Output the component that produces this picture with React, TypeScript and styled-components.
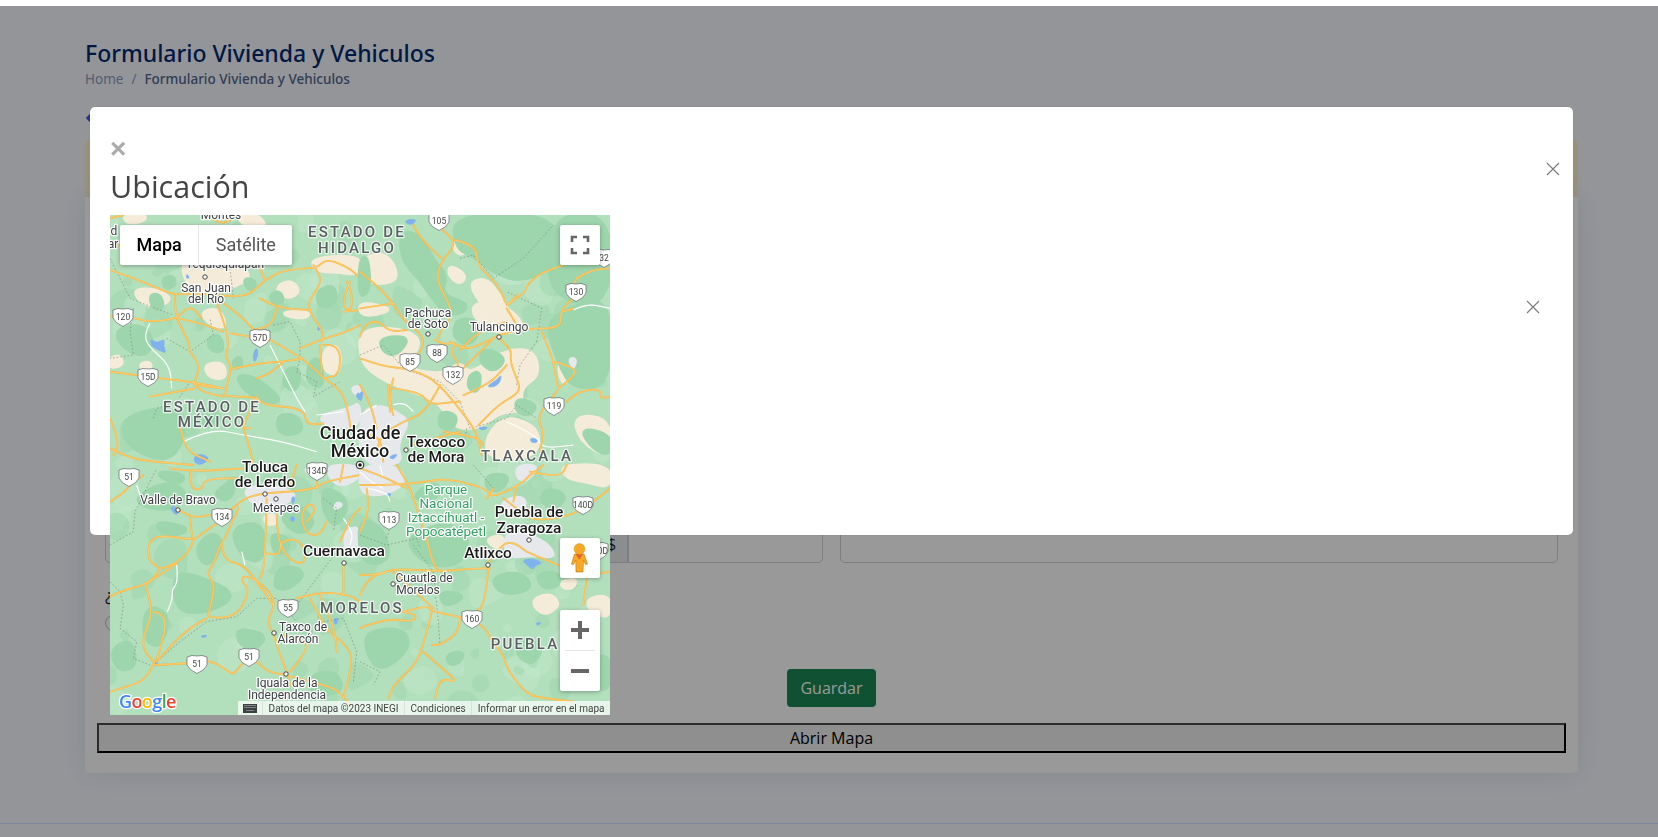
import styled, { createGlobalStyle } from "styled-components"
import { FaArrowLeft } from "react-icons/fa"

// every tile is 250x250 on the map, its paths are in a 750x750 grid
interface ITile {
    x: number
    y: number
    beige: string[]
    dark: string[]
    urban: string[]
    water: string[]
    white: string[]
    borders: string[]
    roads: string[]
}

const tiles: ITile[] = [
    {
        x: 0,
        y: 0,
        beige: [
            "M220 130 L300 160 L340 170 L400 150 L420 190 L380 210 L330 230 L260 230 L220 190Z",
            "M500 215 L540 195 L570 225 L545 250 L510 240Z",
            "M270 290 L330 280 L350 340 L300 330Z",
            "M70 225 L130 220 L190 250 L140 280 L90 260Z",
            "M280 450 L340 440 L350 490 L300 490Z",
            "M0 430 L30 420 L40 450 L0 460Z",
            "M90 445 L120 440 L125 460 L95 465Z",
            "M600 130 L750 120 L750 180 L680 170 L620 170Z",
            "M520 290 L600 290 L590 310 L530 305Z",
            "M640 400 L690 390 L690 480 L640 470Z",
            "M40 0 L110 0 L100 20 L50 25Z",
            "M380 0 L450 0 L470 40 L400 30Z"
        ],
        dark: [
            "M30 340 L90 330 L130 370 L110 420 L60 410 L20 370Z",
            "M30 620 L130 580 L220 590 L220 680 L170 740 L60 700Z",
            "M160 190 L190 185 L195 210 L165 220Z",
            "M295 370 L330 360 L340 410 L300 405Z",
            "M370 440 L390 425 L395 450 L375 460Z",
            "M380 480 L440 490 L520 560 L460 560 L400 520Z",
            "M500 600 L560 600 L580 650 L510 660Z",
            "M480 240 L510 230 L520 260 L490 265Z",
            "M120 240 L150 240 L160 280 L130 280Z",
            "M620 230 L670 210 L680 260 L630 280Z",
            "M600 440 L630 430 L640 520 L590 500Z",
            "M530 460 L570 460 L560 530 L520 510Z",
            "M270 580 L340 600 L300 640 L260 620Z",
            "M400 190 L440 200 L420 230Z"
        ],
        urban: ["M630 600 L720 580 L750 560 L750 640 L640 630Z", "M720 520 L750 510 L750 550Z"],
        water: [
            "M120 370 L140 385 L165 370 L160 395 L170 415 L145 405 L125 395Z",
            "M440 395 L445 420 L432 445 L428 420Z",
            "M250 725 L275 715 L300 730 L275 750 L255 745Z",
            "M230 175 L240 190 L228 190Z",
            "M620 340 L630 330 L628 350Z",
            "M735 540 L750 530 L750 560Z"
        ],
        white: [
            "M120 325 L105 350 L110 390 L180 450 L185 520",
            "M480 390 L510 450 L560 550 L585 590",
            "M620 600 L700 590",
            "M220 680 L300 640 L400 660 L520 680 L620 710"
        ],
        borders: [
            "M0 130 L60 250 L110 270 L190 300",
            "M70 280 L60 350 L70 420 L0 430",
            "M170 370 L240 410 L310 360 L300 310",
            "M490 330 L540 320 L570 380 L570 430 L560 470 L620 500 L610 545 L690 500",
            "M130 610 L140 580 L200 560 L240 500",
            "M360 160 L370 250"
        ],
        roads: [
            "M0 165 L60 185 L130 215 L195 240 L240 235 L320 240",
            "M0 305 L60 305 L110 320 L175 315 L205 305 L240 270 L275 310",
            "M195 240 L195 300 L210 330 L240 390 L235 405 L270 450 L255 500 L250 510 L340 520",
            "M205 310 L275 325 L340 350",
            "M320 265 L350 340 L355 400 L345 420 L365 460 L350 510 L345 540",
            "M340 265 L395 305 L430 345 L480 375 L580 430 L640 490 L700 530 L720 620 L720 640",
            "M0 470 L80 480 L150 490 L240 500 L340 520",
            "M365 462 L440 445 L520 440 L580 430",
            "M340 540 L360 545 L440 545 L460 570 L580 580 L590 630 L640 625",
            "M120 545 L200 530 L255 520 M255 510 L270 530 L340 545",
            "M450 210 L490 175 L560 160 L620 160 L650 130 L720 160 L750 190",
            "M320 240 L400 250 L450 210",
            "M445 150 L465 195",
            "M610 150 L630 180 L630 210 L590 265 L610 310 L640 350 L635 380",
            "M450 250 L500 280 L600 285",
            "M500 280 L490 330 L430 345",
            "M360 355 L420 365",
            "M570 400 L640 370 L700 355 L750 330",
            "M640 390 L690 385 L690 480 L640 490",
            "M630 390 L635 470",
            "M720 200 L690 270 L725 290 L725 230 L710 200",
            "M700 290 L750 285",
            "M0 610 L30 680 L10 720",
            "M210 620 L215 700 L300 740",
            "M400 640 L420 700 L430 750",
            "M440 545 L420 590 L395 640 L420 640",
            "M0 700 L60 730 L130 740 L250 750",
            "M520 440 L490 470 L440 490",
            "M0 10 L40 0 M0 100 L30 90",
            "M290 0 L330 30 L370 10"
        ]
    },
    {
        x: 250,
        y: 0,
        beige: [
            "M0 130 L80 110 L120 190 L60 210 L0 190Z",
            "M270 150 L320 180 L300 210 L265 180Z",
            "M330 200 L380 190 L420 240 L450 290 L400 300 L350 250Z",
            "M0 340 L130 340 L190 380 L130 460 L250 480 L300 440 L330 480 L420 410 L520 400 L540 480 L480 520 L490 590 L420 590 L360 640 L280 640 L240 560 L130 520 L60 490 L0 440Z",
            "M340 260 L440 270 L500 340 L420 360 L340 310Z",
            "M640 600 L750 610 L750 730 L660 680Z",
            "M440 600 L540 640 L530 730 L380 730 L380 660Z",
            "M0 260 L100 280 L50 300 L0 300Z",
            "M280 80 L320 90 L310 120 L285 110Z",
            "M590 440 L640 460 L610 520Z"
        ],
        dark: [
            "M280 0 L590 0 L600 150 L480 200 L400 170 L340 120 L290 100Z",
            "M600 290 L750 240 L750 510 L640 520 L600 450 L560 340Z",
            "M120 50 L180 60 L220 140 L260 180 L240 240 L330 270 L290 300 L240 280 L180 190 L130 140Z",
            "M290 310 L360 320 L340 390 L280 370Z",
            "M60 370 L150 365 L110 420 L70 410Z",
            "M580 0 L750 0 L750 250 L640 270 L560 200Z",
            "M330 480 L360 470 L355 530 L325 520Z",
            "M470 550 L530 570 L510 600 L470 590Z",
            "M0 140 L20 120 L30 220 L0 250Z",
            "M370 400 L440 430 L400 470 L360 440Z",
            "M660 640 L750 660 L750 720 L700 700Z",
            "M240 590 L290 600 L280 640 L240 640Z"
        ],
        urban: ["M0 590 L60 570 L110 590 L150 620 L110 690 L130 750 L0 750Z", "M625 430 L650 430 L640 465Z"],
        water: [
            "M385 510 L410 495 L425 478 L420 502 L405 515 L385 516Z",
            "M135 15 L170 12 L160 28 L140 28Z",
            "M0 530 L10 530 L5 555 L0 560Z",
            "M355 636 L385 636 L375 644 L360 644Z",
            "M510 668 L535 672 L530 684 L512 682Z",
            "M85 725 L115 715 L100 735Z"
        ],
        white: [
            "M640 285 L680 265 L750 280",
            "M440 620 L530 660 L545 700 L640 690",
            "M100 570 L130 560 L160 590",
            "M0 600 L50 570"
        ],
        borders: [
            "M300 130 L340 120 L400 190 L490 130 L580 30",
            "M0 420 L70 390 L130 460 L240 500 L300 560 L330 640 L440 610 L470 570 L530 610",
            "M530 380 L545 280 L440 230",
            "M470 510 L480 450 L530 380",
            "M320 640 L310 700"
        ],
        roads: [
            "M240 40 L280 70 L280 100 L250 130 L225 190 L275 280 L270 310 L240 350 L235 370",
            "M160 30 L180 70 L245 130",
            "M285 75 L350 90 L350 150 L420 215 L440 280 L470 240",
            "M440 270 L495 235 L500 210 L540 175 L610 150",
            "M650 190 L690 165 L750 160",
            "M640 210 L650 190",
            "M640 250 L600 280 L605 340 L500 340 L415 360 L380 380 L320 405 L270 380",
            "M440 280 L470 330",
            "M610 290 L640 280",
            "M0 170 L50 210 L100 265 L130 315 L200 370 L165 440",
            "M0 280 L100 265",
            "M0 365 L10 330 L50 315 L90 350 L140 345",
            "M225 375 L250 390 L290 380 L270 410 L300 450 L280 470",
            "M0 430 L70 455 L140 460 L220 490 L290 570 L350 650 L365 720",
            "M415 370 L455 400 L450 440 L470 490 L480 520 L465 540 L415 570 L355 630",
            "M310 540 L385 510 L440 450",
            "M310 460 L400 370",
            "M545 350 L580 430 L590 510 L600 520 L530 600 L550 650 L540 710",
            "M580 440 L640 455 L645 480 L595 520",
            "M620 560 L650 530 L720 520 L720 550 L750 545",
            "M85 510 L90 590 M100 490 L85 540 L100 600",
            "M240 510 L200 590 L130 620 L60 660 L50 720",
            "M100 520 L180 530 L210 570 L280 560 L300 560",
            "M250 650 L350 665 L370 690",
            "M150 690 L300 650",
            "M0 510 L30 560 L50 640 M20 660 L60 660 L70 740",
            "M300 405 L350 350 L440 320"
        ]
    },
    {
        x: 0,
        y: 250,
        beige: ["M465 150 L500 150 L495 180 L465 175Z"],
        dark: [
            "M70 100 L170 50 L230 80 L200 130 L120 130Z",
            "M140 170 L240 190 L200 210 L150 200Z",
            "M255 250 L310 200 L340 240 L290 310Z",
            "M350 60 L380 30 L360 110 L310 90Z",
            "M360 190 L460 170 L460 290 L400 280Z",
            "M190 320 L280 340 L380 390 L300 440 L200 440Z",
            "M510 300 L590 320 L540 370 L490 370Z",
            "M130 20 L230 30 L200 60Z",
            "M550 110 L620 170 L570 210 L510 160Z",
            "M640 60 L720 110 L680 190 L640 140Z",
            "M380 490 L470 510 L440 550 L390 540Z",
            "M600 630 L680 620 L700 680 L610 690Z",
            "M0 560 L60 520 L80 600 L30 620Z",
            "M110 420 L180 450 L150 550 L100 520Z",
            "M480 200 L550 230 L500 280Z"
        ],
        urban: [
            "M400 70 L480 60 L540 75 L560 100 L470 140 L420 110Z",
            "M580 10 L650 0 L640 30 L600 30Z",
            "M680 110 L700 120 L670 135Z",
            "M700 200 L750 180 L750 270 L710 280Z",
            "M640 0 L750 0 L750 40 L680 70Z"
        ],
        water: [
            "M180 125 L200 125 L205 150 L190 145Z",
            "M130 590 L145 580 L140 605 L130 602Z",
            "M545 95 L555 95 L552 115 L545 115Z",
            "M540 155 L555 155 L552 170 L542 168Z",
            "M270 512 L295 510 L280 520Z",
            "M672 460 L684 458 L682 478 L672 478Z"
        ],
        white: ["M200 300 L205 350 L185 375 L188 400 L172 440", "M80 60 L90 90", "M395 260 L405 300", "M700 160 L730 200 L720 240"],
        borders: [
            "M0 240 L70 200 L75 140 L110 70 L140 10",
            "M0 350 L30 380 L40 420 L30 490 L80 530 L70 580 L120 600",
            "M140 590 L210 530 L290 470 L380 455 L440 400 L500 400 L560 470",
            "M640 100 L680 130 L670 200",
            "M560 420 L620 340 L680 260",
            "M640 470 L700 460 L740 560 L730 650"
        ],
        roads: [
            "M0 110 L40 85 L60 60 L100 30",
            "M180 10 L240 20 L400 10",
            "M240 20 L240 70 L275 75 L285 40 L400 40",
            "M200 130 L240 160 L300 150 L360 140 L400 100 L460 85 L540 80 L620 70 L640 50 L750 30",
            "M240 160 L245 210 L250 225 L150 210 L115 230 L115 290 L155 310 L120 350 L105 360 L130 440 L90 540 L130 590",
            "M250 225 L320 175",
            "M250 225 L240 260 L190 300 L150 310",
            "M0 395 L40 375 L105 360 L200 295",
            "M130 440 L175 445 L150 560 L130 600 L100 650 L0 680",
            "M385 130 L350 210 L330 240 L310 300 L290 325 L315 360 L300 430 L290 460 L380 455 L420 375 L395 350 L400 330 L450 350 L500 410 L470 470 L490 505 L510 570 L530 620 L540 660",
            "M335 240 L340 285 L400 300 L440 350 L490 420",
            "M290 460 L230 490 L140 590",
            "M130 600 L240 595 L300 585 L350 615 L370 630 L400 590 L440 585 L470 620 L530 630",
            "M470 100 L465 300 L450 340",
            "M500 150 L500 210 L530 280 L580 300 L590 260 L560 220 L510 230 L510 270 L470 265",
            "M590 170 L620 140 L600 110 L570 150 L590 210 L630 210 L650 170",
            "M560 400 L630 380 L720 390 L750 410",
            "M600 400 L650 500 L700 530 L730 580 L700 700",
            "M680 560 L680 510 L630 390",
            "M700 300 L700 390",
            "M690 230 L720 160 L750 130",
            "M540 620 L600 550 L570 520 L510 510",
            "M530 630 L600 650 L680 670 L720 720",
            "M540 60 L560 0 M620 70 L620 0 M700 0 L690 50"
        ]
    },
    {
        x: 250,
        y: 250,
        beige: [
            "M600 0 L750 0 L750 70 L680 50 L620 40Z",
            "M520 400 L575 385 L600 420 L560 450 L525 430Z",
            "M380 220 L430 210 L430 250 L395 245Z",
            "M600 350 L650 340 L640 370 L610 370Z",
            "M680 400 L750 390 L750 460 L690 440Z",
            "M260 225 L295 225 L285 255 L265 245Z"
        ],
        dark: [
            "M130 220 L260 170 L330 220 L300 300 L200 300Z",
            "M0 160 L70 190 L90 280 L30 300 L0 260Z",
            "M20 500 L130 490 L150 550 L60 620 L20 560Z",
            "M390 340 L480 320 L520 370 L430 390Z",
            "M240 380 L310 390 L290 410 L250 420Z",
            "M260 570 L310 560 L300 590 L270 600Z",
            "M530 330 L590 320 L600 360 L550 370Z",
            "M480 520 L550 540 L520 600 L470 570Z",
            "M160 90 L230 50 L240 90 L190 110Z",
            "M560 70 L620 90 L590 130 L540 110Z",
            "M380 30 L450 30 L420 80 L380 70Z",
            "M650 600 L750 560 L750 680 L680 660Z"
        ],
        urban: [
            "M0 0 L110 0 L140 50 L80 90 L0 90Z",
            "M430 210 L480 200 L560 230 L590 280 L520 270 L440 280Z",
            "M420 110 L490 90 L500 130 L440 140Z",
            "M470 0 L540 0 L500 50 L470 40Z"
        ],
        water: [
            "M485 285 L520 280 L550 295 L525 300 L520 315 L500 300Z",
            "M80 85 L95 85 L88 97Z",
            "M525 475 L545 470 L535 482Z"
        ],
        white: ["M0 20 L30 50 L70 70", "M60 0 L70 40", "M20 70 L80 80 L90 110"],
        borders: [
            "M0 210 L80 240 L170 220 L180 250",
            "M340 0 L400 70",
            "M220 320 L235 470 L240 540",
            "M0 590 L60 620 L40 660",
            "M160 240 L220 320",
            "M80 220 L95 170"
        ],
        roads: [
            "M0 60 L100 60 L200 50 L260 40 L380 70 L390 100 L480 60 L520 20",
            "M110 0 L140 50 L150 70 L200 220 L220 300 L240 320",
            "M0 330 L60 330 L100 310 L240 320 L340 310 L390 310",
            "M385 310 L375 420 L345 440",
            "M0 390 L20 340 L80 320",
            "M130 440 L200 420 L215 440 L300 455 L370 480 L390 520 L430 570 L440 610 L500 690 L560 700 L640 710",
            "M100 320 L220 430",
            "M215 440 L190 540 L165 600 L100 660 L85 700",
            "M190 560 L270 630 L290 650 L240 640 L225 700",
            "M0 490 L70 460 L160 470 L170 450 L130 440",
            "M300 455 L300 500 L240 540 L215 540",
            "M500 260 L590 300 L680 330 L750 320",
            "M680 340 L670 420",
            "M430 100 L470 130 L520 170 L640 150 L700 110 L750 70",
            "M380 100 L400 70",
            "M510 20 L600 40 L620 0",
            "M470 60 L460 110",
            "M0 10 L60 30 L140 70",
            "M375 310 L420 240 L460 230 L500 260",
            "M550 0 L500 40",
            "M620 660 L640 610 L680 560 L680 520",
            "M20 70 L30 130 L0 200"
        ]
    }
]

const stateNames = [
    { x: 247, y: 22, text: "ESTADO DE" },
    { x: 247, y: 38, text: "HIDALGO" },
    { x: 102, y: 197, text: "ESTADO DE" },
    { x: 102, y: 212, text: "MÉXICO" },
    { x: 417, y: 246, text: "TLAXCALA" },
    { x: 252, y: 398, text: "MORELOS" },
    { x: 415, y: 434, text: "PUEBLA" }
]

const bigCities = [
    { x: 155, y: 257, text: "Toluca" },
    { x: 155, y: 272, text: "de Lerdo" },
    { x: 326, y: 232, text: "Texcoco" },
    { x: 326, y: 247, text: "de Mora" },
    { x: 234, y: 341, text: "Cuernavaca" },
    { x: 419, y: 302, text: "Puebla de" },
    { x: 419, y: 318, text: "Zaragoza" },
    { x: 378, y: 343, text: "Atlixco" }
]

const capitalCity = [
    { x: 250, y: 224, text: "Ciudad de" },
    { x: 250, y: 242, text: "México" }
]

const smallCities = [
    { x: 111, y: 4, text: "Montes" },
    { x: 115, y: 53, text: "Tequisquiapan" },
    { x: 96, y: 77, text: "San Juan" },
    { x: 96, y: 88, text: "del Río" },
    { x: 318, y: 102, text: "Pachuca" },
    { x: 318, y: 113, text: "de Soto" },
    { x: 389, y: 116, text: "Tulancingo" },
    { x: 68, y: 289, text: "Valle de Bravo" },
    { x: 166, y: 297, text: "Metepec" },
    { x: 314, y: 367, text: "Cuautla de" },
    { x: 308, y: 379, text: "Morelos" },
    { x: 193, y: 416, text: "Taxco de" },
    { x: 188, y: 428, text: "Alarcón" },
    { x: 177, y: 472, text: "Iguala de la" },
    { x: 177, y: 484, text: "Independencia" },
    { x: 4, y: 20, text: "d" },
    { x: 3, y: 33, text: "ar" }
]

const parkNames = [
    { x: 336, y: 279, text: "Parque" },
    { x: 336, y: 293, text: "Nacional" },
    { x: 336, y: 307, text: "Iztaccíhuatl -" },
    { x: 336, y: 321, text: "Popocatépetl" }
]

const shields = [
    { x: 13, y: 102, text: "120" },
    { x: 150, y: 123, text: "57D" },
    { x: 38, y: 162, text: "15D" },
    { x: 207, y: 256, text: "134D" },
    { x: 329, y: 6, text: "105" },
    { x: 494, y: 43, text: "32" },
    { x: 466, y: 77, text: "130" },
    { x: 300, y: 147, text: "85" },
    { x: 327, y: 138, text: "88" },
    { x: 343, y: 160, text: "132" },
    { x: 444, y: 191, text: "119" },
    { x: 19, y: 262, text: "51" },
    { x: 112, y: 302, text: "134" },
    { x: 87, y: 449, text: "51" },
    { x: 139, y: 442, text: "51" },
    { x: 178, y: 393, text: "55" },
    { x: 279, y: 305, text: "113" },
    { x: 473, y: 290, text: "140D" },
    { x: 362, y: 404, text: "160" },
    { x: 488, y: 336, text: "140D" }
]

const dots = [
    [95, 62], [318, 119], [389, 122], [296, 235], [155, 279], [166, 284], [68, 295], [234, 348],
    [164, 418], [176, 459], [419, 325], [378, 350], [283, 369]
]

// turns the M/L/Z outlines into soft curves, the map has no hard corners
function smooth(d: string) {
    return d.split("M").filter(Boolean).map((segment) => {
        const closed = segment.includes("Z")
        const pts = segment.replace("Z", "").trim().split("L").map((p) => p.trim().split(/\s+/).map(Number))
        const mid = (a: number[], b: number[]) => `${(a[0] + b[0]) / 2} ${(a[1] + b[1]) / 2}`
        if (closed) {
            let out = `M${mid(pts[pts.length - 1], pts[0])}`
            pts.forEach((p, i) => {
                out += ` Q${p[0]} ${p[1]} ${mid(p, pts[(i + 1) % pts.length])}`
            })
            return `${out}Z`
        }
        let out = `M${pts[0][0]} ${pts[0][1]}`
        for (let i = 1; i < pts.length - 1; i++) {
            out += ` Q${pts[i][0]} ${pts[i][1]} ${mid(pts[i], pts[i + 1])}`
        }
        return `${out} L${pts[pts.length - 1][0]} ${pts[pts.length - 1][1]}`
    }).join(" ")
}

// vegetation texture: small patches from a fixed seed so the picture never changes
function makePatches(count: number) {
    let seed = 7
    const next = () => {
        seed = (seed * 16807) % 2147483647
        return seed / 2147483647
    }
    return Array.from({ length: count }, () => {
        const cx = next() * 500
        const cy = next() * 500
        const r = 5 + next() * 16
        const points = [0, 1, 2, 3, 4, 5].map((i) => {
            const angle = (i / 6) * Math.PI * 2
            const radius = r * (0.6 + next() * 0.7)
            return `${(cx + Math.cos(angle) * radius).toFixed(1)} ${(cy + Math.sin(angle) * radius).toFixed(1)}`
        })
        return { d: smooth(`M${points.join(" L")}Z`), light: next() > 0.55 }
    })
}

const patches = makePatches(190)


function MapDrawing() {
    return (
        <MapSvg viewBox="0 0 500 500" width="500" height="500">
            <rect width="500" height="500" fill="#b2dfbc" />
            {patches.map((p) => <Patch key={p.d} d={p.d} light={p.light} />)}
            {tiles.map((tile) => (
                <g key={`${tile.x}-${tile.y}`} transform={`translate(${tile.x} ${tile.y}) scale(0.3334)`}>
                    <Beige>{tile.beige.map((d) => <path key={d} d={smooth(d)} />)}</Beige>
                    <DarkGreen>{tile.dark.map((d) => <path key={d} d={smooth(d)} />)}</DarkGreen>
                    <Urban>{tile.urban.map((d) => <path key={d} d={smooth(d)} />)}</Urban>
                    <Water>{tile.water.map((d) => <path key={d} d={smooth(d)} />)}</Water>
                    <WhiteRoads>{tile.white.map((d) => <path key={d} d={smooth(d)} />)}</WhiteRoads>
                    <Borders>{tile.borders.map((d) => <path key={d} d={d} />)}</Borders>
                    <RoadCasing>{tile.roads.map((d) => <path key={d} d={smooth(d)} />)}</RoadCasing>
                    <RoadInner>{tile.roads.map((d) => <path key={d} d={smooth(d)} />)}</RoadInner>
                </g>
            ))}

            {shields.map((s) => (
                <g key={`${s.x}-${s.y}`} transform={`translate(${s.x} ${s.y})`}>
                    <ShieldShape d="M-10 -7 Q-5 -9.5 0 -8 Q5 -9.5 10 -7 L10 1 Q8 6 0 9.5 Q-8 6 -10 1 Z" />
                    <ShieldText y="3">{s.text}</ShieldText>
                </g>
            ))}

            {dots.map(([x, y]) => <CityDot key={`${x}-${y}`} cx={x} cy={y} r="2.2" />)}
            <circle cx="250" cy="250" r="3.8" fill="#fff" stroke="#222" strokeWidth="1" />
            <circle cx="250" cy="250" r="1.8" fill="#111" />

            {stateNames.map((l) => <StateLabel key={`${l.text}-${l.y}`} x={l.x} y={l.y}>{l.text}</StateLabel>)}
            {capitalCity.map((l) => <CapitalLabel key={l.text} x={l.x} y={l.y}>{l.text}</CapitalLabel>)}
            {bigCities.map((l) => <BigCity key={l.text} x={l.x} y={l.y}>{l.text}</BigCity>)}
            {smallCities.map((l) => <SmallCity key={l.text} x={l.x} y={l.y}>{l.text}</SmallCity>)}
            {parkNames.map((l) => <ParkLabel key={l.text} x={l.x} y={l.y}>{l.text}</ParkLabel>)}

            <GoogleLogo x="9" y="493">
                <tspan fill="#4285f4">G</tspan>
                <tspan fill="#ea4335">o</tspan>
                <tspan fill="#fbbc05">o</tspan>
                <tspan fill="#4285f4">g</tspan>
                <tspan fill="#34a853">l</tspan>
                <tspan fill="#ea4335">e</tspan>
            </GoogleLogo>
        </MapSvg>
    )
}

function CloseIcon() {
    return (
        <svg width="14" height="14" viewBox="0 0 14 14">
            <path d="M1 1 L13 13 M13 1 L1 13" stroke="#7d7d7d" strokeWidth="1.2" fill="none" />
        </svg>
    )
}

export default function App() {
    return (
        <>
            <GlobalStyle />
            <TopStrip />
            <Main>
                <PageTitle>Formulario Vivienda y Vehiculos</PageTitle>
                <Breadcrumb>
                    <Crumb>Home</Crumb>
                    <Slash>/</Slash>
                    <CrumbActive>Formulario Vivienda y Vehiculos</CrumbActive>
                </Breadcrumb>
                <BackRow><FaArrowLeft /></BackRow>
                <Alert />
                <Card>
                    <FormRow>
                        <InputGroup>
                            <Input />
                            <Addon>$</Addon>
                            <InputSmall />
                        </InputGroup>
                        <Input />
                    </FormRow>
                    <Question>¿</Question>
                    <Radio />
                    <SaveRow>
                        <SaveButton>Guardar</SaveButton>
                    </SaveRow>
                    <OpenMapButton>Abrir Mapa</OpenMapButton>
                </Card>
            </Main>
            <Footer />

            <Backdrop>
                <Modal>
                    <ModalClose><CloseIcon /></ModalClose>
                    <ContentClose><CloseIcon /></ContentClose>
                    <TimesButton>×</TimesButton>
                    <ModalTitle>Ubicación</ModalTitle>
                    <MapFrame>
                        <MapDrawing />

                        <MapTypeControl>
                            <MapTypeButton active>Mapa</MapTypeButton>
                            <MapTypeButton>Satélite</MapTypeButton>
                        </MapTypeControl>

                        <FullscreenButton>
                            <svg width="20" height="20" viewBox="0 0 20 20">
                                <path d="M2 7V2H7M13 2H18V7M18 13V18H13M7 18H2V13" fill="none" stroke="#666" strokeWidth="2.6" />
                            </svg>
                        </FullscreenButton>

                        <PegmanButton>
                            <svg width="40" height="40" viewBox="0 0 40 40">
                                <path d="M14.5 16 H24 L27.5 26 L25.5 26.5 L23.5 22 L23 34 H16 L15.8 22 L13.5 26.5 L11.5 26 Z" fill="#f9a825" stroke="#b97a10" strokeWidth="0.6" />
                                <path d="M15.5 16 L19.3 21.5 L23 16 Z" fill="#e2622a" />
                                <circle cx="19.5" cy="11" r="5.4" fill="#f9a825" stroke="#d08d15" strokeWidth="0.5" />
                            </svg>
                        </PegmanButton>

                        <ZoomControl>
                            <ZoomButton>
                                <svg width="18" height="18" viewBox="0 0 18 18">
                                    <path d="M7 0H11V7H18V11H11V18H7V11H0V7H7Z" fill="#666" />
                                </svg>
                            </ZoomButton>
                            <ZoomDivider />
                            <ZoomButton>
                                <svg width="18" height="18" viewBox="0 0 18 18">
                                    <path d="M0 7H18V11H0Z" fill="#666" />
                                </svg>
                            </ZoomButton>
                        </ZoomControl>

                        <Attribution>
                            <KeyboardCell>
                                <svg width="14" height="9" viewBox="0 0 14 9">
                                    <path d="M0 0H14V9H0Z" fill="#3c4043" />
                                    <path d="M1.5 1.5H12.5M1.5 3.5H12.5M3.5 6.5H10.5" stroke="#ddd" strokeWidth="0.9" strokeDasharray="1 1" />
                                </svg>
                            </KeyboardCell>
                            <AttrText>Datos del mapa ©2023 INEGI</AttrText>
                            <AttrText>Condiciones</AttrText>
                            <AttrText>Informar un error en el mapa</AttrText>
                        </Attribution>
                    </MapFrame>
                </Modal>
            </Backdrop>
        </>
    )
}


const GlobalStyle = createGlobalStyle`
    html, body {
        margin: 0;
        height: 100%;
        overflow: hidden;
        background-color: #f6f9ff;
        font-family: "Open Sans", sans-serif;
    }
`

const TopStrip = styled.div`
    height: 6px;
    background-color: #ffffff;
`

const Main = styled.main`
    padding: 31px 80px 0 85px;
`

const PageTitle = styled.h1`
    margin: 0;
    font-family: "Noto Sans", sans-serif;
    font-size: 23px;
    line-height: 32px;
    font-weight: 500;
    color: #012970;
`

const Breadcrumb = styled.div`
    display: flex;
    gap: 8px;
    margin-top: 0;
    font-family: "Noto Sans", sans-serif;
    font-size: 13.5px;
    line-height: 20px;
`

const Crumb = styled.span`
    color: #899bbd;
`

const Slash = styled.span`
    color: #899bbd;
`

const CrumbActive = styled.span`
    color: #51678f;
    font-weight: 500;
`

const BackRow = styled.div`
    height: 50px;
    padding-top: 20px;
    box-sizing: border-box;
    font-size: 16px;
    color: #4154f1;
`

const Alert = styled.div`
    height: 58px;
    background-color: #fff3cd;
    border-radius: 6px 6px 0 0;
`

const Card = styled.section`
    height: 576px;
    box-sizing: border-box;
    padding: 328px 12px 0;
    background-color: #ffffff;
    border-radius: 0 0 5px 5px;
    box-shadow: 0 0 30px rgba(1, 41, 112, 0.1);
`

const FormRow = styled.div`
    display: flex;
    gap: 17px;
    padding: 0 8px;
`

const InputGroup = styled.div`
    display: flex;
    width: 718px;
    flex: none;
`

const Input = styled.div`
    flex: 1;
    height: 38px;
    box-sizing: border-box;
    border: 1px solid #ced4da;
    border-radius: 5px;
    background-color: #ffffff;
`

const InputSmall = styled(Input)`
    flex: none;
    width: 195px;
    border-radius: 0 5px 5px 0;
`

const Addon = styled.div`
    width: 30px;
    height: 38px;
    box-sizing: border-box;
    padding-left: 8px;
    line-height: 36px;
    color: #212529;
    background-color: #e9ecef;
    border: 1px solid #ced4da;
`

const Question = styled.div`
    margin: 20px 0 0 8px;
    font-size: 16px;
    line-height: 24px;
    color: #212529;
`

const Radio = styled.div`
    width: 16px;
    height: 16px;
    margin: 8px 0 0 8px;
    box-sizing: border-box;
    border: 1px solid #bfbfbf;
    border-radius: 50%;
    background-color: #ffffff;
`

const SaveRow = styled.div`
    display: flex;
    justify-content: center;
    margin-top: 38px;
`

const SaveButton = styled.button`
    height: 38px;
    width: 89px;
    padding: 0;
    border: none;
    border-radius: 4px;
    background-color: #198754;
    color: #ffffff;
    font-family: "Open Sans", sans-serif;
    font-size: 16px;
`

const OpenMapButton = styled.button`
    display: block;
    width: 100%;
    height: 30px;
    margin-top: 16px;
    border-width: 2px;
    border-style: outset;
    border-color: #4a4a4a #000 #000 #4a4a4a;
    background-color: #efefef;
    color: #000000;
    font-family: "Open Sans", sans-serif;
    font-size: 16px;
`

const Footer = styled.footer`
    margin-top: 50px;
    border-top: 1px solid #cddfff;
`

const Backdrop = styled.div`
    position: fixed;
    top: 6px;
    left: 0;
    right: 0;
    bottom: 0;
    background-color: rgba(0, 0, 0, 0.4);
`

const Modal = styled.div`
    position: absolute;
    top: 101px;
    left: 90px;
    width: 1483px;
    height: 428px;
    box-sizing: border-box;
    padding: 29px 20px 0;
    background-color: #ffffff;
    border-radius: 5px;
    box-shadow: 0 0 1px rgba(0, 0, 0, 0.3);
`

const ModalClose = styled.div`
    position: absolute;
    top: 55px;
    right: 13px;
    line-height: 0;
`

const ContentClose = styled.div`
    position: absolute;
    top: 193px;
    right: 33px;
    line-height: 0;
`

const TimesButton = styled.div`
    height: 26px;
    font-family: "Liberation Sans", sans-serif;
    font-size: 28px;
    line-height: 26px;
    font-weight: 700;
    color: #aaaaaa;
`

const ModalTitle = styled.h2`
    margin: 2px 0 0;
    font-family: "Open Sans", sans-serif;
    font-size: 30.5px;
    line-height: 44px;
    font-weight: 400;
    color: #444444;
    height: 51px;
`

const MapFrame = styled.div`
    position: relative;
    width: 500px;
    height: 500px;
    overflow: hidden;
`

const MapSvg = styled.svg`
    display: block;
`

const Patch = styled.path<{ light: boolean }>`
    fill: ${props => props.light ? "#c0e6ca" : "#a2d9b1"};
    opacity: 0.6;
`

const Beige = styled.g`
    fill: #f4ebd8;
    stroke: #f4ebd8;
    stroke-width: 10;
    stroke-linejoin: round;
`

const DarkGreen = styled.g`
    fill: #9dd6ac;
    stroke: #9dd6ac;
    stroke-width: 14;
    stroke-linejoin: round;
`

const Urban = styled.g`
    fill: #e6e8ec;
    stroke: #e6e8ec;
    stroke-width: 8;
    stroke-linejoin: round;
`

const Water = styled.g`
    fill: #7fb2ee;
    stroke: #7fb2ee;
    stroke-width: 2;
    stroke-linejoin: round;
`

const WhiteRoads = styled.g`
    fill: none;
    stroke: #ffffff;
    stroke-width: 3.5;
    stroke-linejoin: round;
`

const Borders = styled.g`
    fill: none;
    stroke: #7d8a80;
    stroke-width: 2;
    stroke-dasharray: 5 6;
`

const RoadCasing = styled.g`
    fill: none;
    stroke: #fab53c;
    stroke-width: 5.6;
    stroke-linejoin: round;
    stroke-linecap: round;
`

const RoadInner = styled.g`
    fill: none;
    stroke: #fee0a0;
    stroke-width: 1.6;
    stroke-linejoin: round;
    stroke-linecap: round;
`

const ShieldShape = styled.path`
    fill: #ffffff;
    stroke: #5f6368;
    stroke-width: 0.7;
`

const ShieldText = styled.text`
    font-family: Roboto, sans-serif;
    font-size: 8.5px;
    text-anchor: middle;
    fill: #444444;
`

const CityDot = styled.circle`
    fill: #ffffff;
    stroke: #444444;
    stroke-width: 1;
`

const MapLabel = styled.text`
    font-family: Roboto, sans-serif;
    text-anchor: middle;
    paint-order: stroke;
    stroke: #ffffff;
    stroke-width: 2.4px;
    stroke-linejoin: round;
`

const StateLabel = styled(MapLabel)`
    font-size: 15px;
    font-weight: 500;
    letter-spacing: 2.2px;
    fill: #5a5e63;
    stroke-opacity: 0.75;
`

const BigCity = styled(MapLabel)`
    font-size: 15.5px;
    font-weight: 500;
    fill: #1a1a1a;
`

const CapitalLabel = styled(BigCity)`
    font-size: 18px;
`

const SmallCity = styled(MapLabel)`
    font-size: 12px;
    fill: #3c4043;
`

const ParkLabel = styled(MapLabel)`
    font-size: 13.5px;
    fill: #34a063;
`

const GoogleLogo = styled.text`
    font-family: "Open Sans", sans-serif;
    font-size: 18px;
    font-weight: 600;
    letter-spacing: -0.6px;
    paint-order: stroke;
    stroke: #ffffff;
    stroke-width: 2.5px;
`

const ControlBox = styled.div`
    position: absolute;
    display: flex;
    align-items: center;
    justify-content: center;
    background-color: #ffffff;
    border-radius: 2px;
    box-shadow: 0 1px 4px rgba(0, 0, 0, 0.3);
`

const MapTypeControl = styled(ControlBox)`
    top: 10px;
    left: 10px;
    height: 40px;
    align-items: stretch;
`

const MapTypeButton = styled.div<{ active?: boolean }>`
    display: flex;
    align-items: center;
    padding: 0 16.5px 2px;
    font-family: Roboto, sans-serif;
    font-size: 18px;
    font-weight: ${props => props.active ? 500 : 400};
    color: ${props => props.active ? "#000000" : "#565656"};
    border-right: ${props => props.active ? "1px solid #e6e6e6" : "none"};
`

const FullscreenButton = styled(ControlBox)`
    top: 10px;
    right: 10px;
    width: 40px;
    height: 40px;
`

const PegmanButton = styled(ControlBox)`
    top: 323px;
    right: 10px;
    width: 40px;
    height: 40px;
`

const ZoomControl = styled(ControlBox)`
    top: 395px;
    right: 10px;
    width: 40px;
    height: 81px;
    flex-direction: column;
`

const ZoomButton = styled.div`
    display: flex;
    align-items: center;
    justify-content: center;
    width: 40px;
    height: 40px;
    line-height: 0;
`

const ZoomDivider = styled.div`
    width: 30px;
    height: 1px;
    background-color: #e6e6e6;
`

const Attribution = styled.div`
    position: absolute;
    right: 0;
    bottom: 0;
    display: flex;
    align-items: center;
    height: 14px;
    font-family: Roboto, sans-serif;
    font-size: 10px;
    color: #444444;
`

const AttrText = styled.span`
    display: flex;
    align-items: center;
    height: 100%;
    padding: 0 5.5px;
    background-color: rgba(255, 255, 255, 0.7);
    border-left: 1px solid rgba(220, 220, 220, 0.9);
`

const KeyboardCell = styled.span`
    display: flex;
    align-items: center;
    justify-content: center;
    width: 24px;
    height: 100%;
    background-color: rgba(255, 255, 255, 0.7);
`
